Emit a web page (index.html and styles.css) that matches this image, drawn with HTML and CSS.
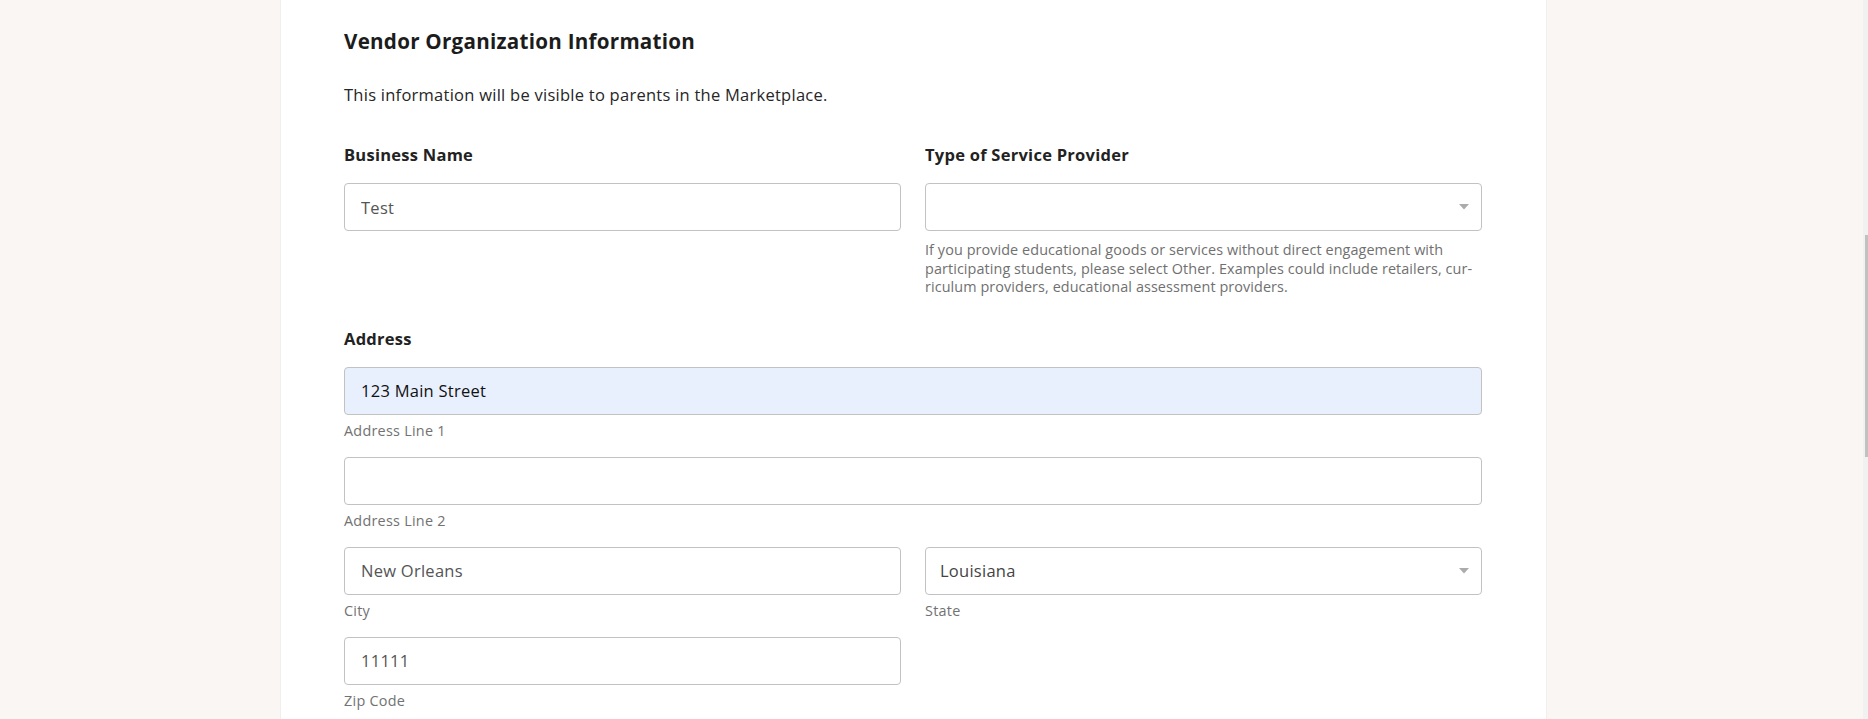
FILE: index.html
```html
<!DOCTYPE html>
<html lang="en">
<head>
<meta charset="utf-8">
<title>Vendor Organization Information</title>
<link rel="stylesheet" href="styles.css">
</head>
<body>
<div class="page">
  <main class="card">
    <h2 class="title">Vendor Organization Information</h2>
    <p class="intro">This information will be visible to parents in the Marketplace.</p>

    <div class="row">
      <div class="field">
        <label class="label" for="bname">Business Name</label>
        <input class="input" id="bname" type="text" value="Test">
      </div>
      <div class="field">
        <label class="label">Type of Service Provider</label>
        <div class="select">
          <span class="select-value"></span>
          <svg class="arrow" width="10" height="6" viewBox="0 0 10 6"><path d="M0 0 L10 0 L5 5.5 Z" fill="#ababab"/></svg>
        </div>
        <p class="help">If you provide educational goods or services without direct engagement with participating students, please select Other. Examples could include retailers, cur&shy;riculum providers, educational assessment providers.</p>
      </div>
    </div>

    <div class="group">
      <label class="label">Address</label>
      <input class="input autofill" type="text" value="123 Main Street">
      <div class="sub">Address Line 1</div>
      <input class="input gap" type="text" value="">
      <div class="sub">Address Line 2</div>
      <div class="grid">
        <div class="cell">
          <input class="input" type="text" value="New Orleans">
          <div class="sub">City</div>
        </div>
        <div class="cell">
          <div class="select">
            <span class="select-value dark">Louisiana</span>
            <svg class="arrow" width="10" height="6" viewBox="0 0 10 6"><path d="M0 0 L10 0 L5 5.5 Z" fill="#ababab"/></svg>
          </div>
          <div class="sub">State</div>
        </div>
        <div class="cell">
          <input class="input" type="text" value="11111">
          <div class="sub">Zip Code</div>
        </div>
      </div>
    </div>
  </main>
</div>
<div class="scrollbar"><div class="thumb"></div></div>
</body>
</html>
```

FILE: styles.css
```css
html, body {
  margin: 0;
  padding: 0;
  height: 100%;
  overflow: hidden;
}
body {
  background: #f9f6f3;
  font-family: "Open Sans", "Noto Sans", "Liberation Sans", sans-serif;
  letter-spacing: 0.016em;
  color: #222;
}
.page {
  padding-left: 281px;
  height: 100%;
}
.card {
  width: 1265px;
  box-sizing: border-box;
  height: 100%;
  background: #ffffff;
  padding: 27px 64px 0 63px;
  box-shadow: 0 0 0 1px #f1eeeb;
}
.title {
  margin: 0;
  font-size: 20.6px;
  line-height: 28px;
  font-weight: 700;
  color: #1c1c1c;
}
.intro {
  margin: 28px 0 0;
  font-size: 16.5px;
  line-height: 24px;
  color: #262626;
}
.row {
  margin-top: 36px;
  display: grid;
  grid-template-columns: 1fr 1fr;
  column-gap: 24px;
}
.field {
  display: flex;
  flex-direction: column;
}
.label {
  display: block;
  font-size: 16.5px;
  line-height: 24px;
  font-weight: 700;
  color: #222;
  margin-bottom: 16px;
}
.input {
  display: block;
  width: 100%;
  box-sizing: border-box;
  height: 48px;
  margin: 0;
  padding: 0 16px;
  border: 1px solid #c2c2c2;
  border-radius: 4px;
  background: #fff;
  font-family: inherit;
  letter-spacing: 0.016em;
  font-size: 16.5px;
  color: #555;
  outline: none;
}
.input.autofill {
  background: #e8f0fe;
  color: #111;
}
.select {
  position: relative;
  display: flex;
  align-items: center;
  height: 48px;
  box-sizing: border-box;
  border: 1px solid #c2c2c2;
  border-radius: 4px;
  padding: 0 14px;
  background: #fff;
  font-size: 16.5px;
  color: #555;
}
.select-value.dark {
  color: #444;
}
.arrow {
  position: absolute;
  right: 12px;
  top: 50%;
  margin-top: -3px;
}
.help {
  margin: 10px 0 0;
  font-size: 14.4px;
  line-height: 18.6px;
  letter-spacing: 0.006em;
  color: #707070;
  hyphens: manual;
}
.group {
  margin-top: 30px;
}
.sub {
  margin-top: 6px;
  font-size: 14.4px;
  line-height: 20px;
  color: #727272;
}
.gap {
  margin-top: 16px;
}
.grid {
  margin-top: 16px;
  display: grid;
  grid-template-columns: 1fr 1fr;
  column-gap: 24px;
  row-gap: 16px;
}
.scrollbar {
  position: fixed;
  top: 0;
  right: 0;
  width: 5px;
  height: 100%;
  background: #f1f1f1;
}
.thumb {
  margin-top: 235px;
  margin-left: 2px;
  width: 3px;
  height: 222px;
  background: #c1c1c1;
}
```
